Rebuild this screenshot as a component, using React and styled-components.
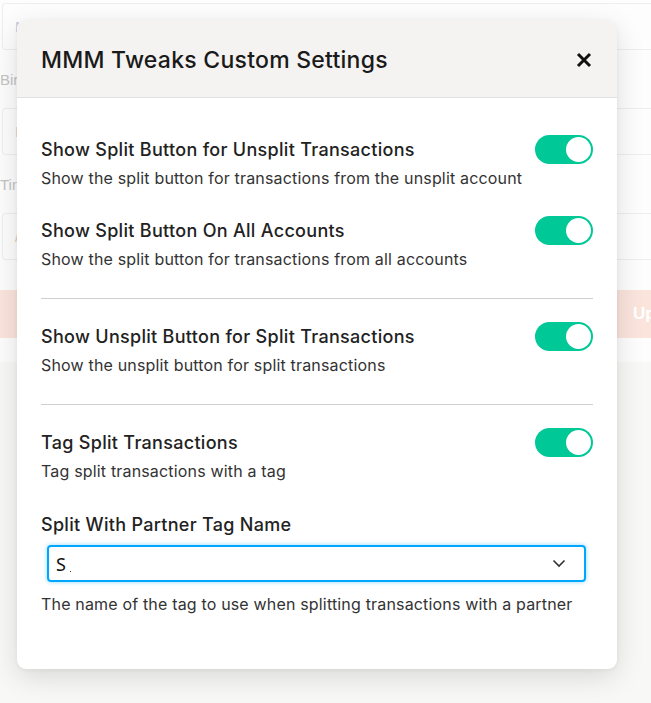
import React from "react";
import styled, { createGlobalStyle } from "styled-components";

const Global = createGlobalStyle`
  html, body { margin: 0; padding: 0; }
  body {
    width: 651px; height: 703px; overflow: hidden;
    background: #f8f8f6;
    font-family: Inter, "Noto Sans", sans-serif;
    color: #222;
  }
`;

const Stage = styled.div`
  position: relative;
  width: 651px;
  height: 703px;
  overflow: hidden;
  background: #f8f8f6;
`;

const BgForm = styled.div`
  display: flex;
  flex-direction: column;
  background: #fdfdfd;
  padding: 3px 0 0 2px;
  height: 362px;
  box-sizing: border-box;
  width: 700px;
`;

const BgInput = styled.div`
  height: 47px;
  box-sizing: border-box;
  border: 1px solid #eeeeee;
  border-right: none;
  border-radius: 4px 0 0 4px;
  display: flex;
  align-items: center;
  padding-left: 12px;
  font-family: "Liberation Sans", Arial, sans-serif;
  font-size: 15px;
  color: ${(p) => p.$color || "#c9ccd8"};
`;

const BgLabel = styled.div`
  height: ${(p) => p.$h || 58}px;
  display: flex;
  align-items: center;
  margin-left: -2px;
  font-family: "Liberation Sans", Arial, sans-serif;
  font-size: 15px;
  color: #c4c4c4;
`;

const BgButton = styled.div`
  height: 48px;
  margin-left: -2px;
  background: #fbe4dc;
  display: flex;
  align-items: center;
  padding-left: 633px;
  font-family: "Liberation Sans", Arial, sans-serif;
  font-weight: 700;
  font-size: 17px;
  color: #ffffff;
`;

const Modal = styled.div`
  position: absolute;
  top: 20px;
  left: 17px;
  width: 600px;
  height: 649px;
  background: #ffffff;
  border-radius: 9px;
  box-shadow: 0 8px 28px rgba(0, 0, 0, 0.13), 0 1px 4px rgba(0, 0, 0, 0.05);
  overflow: hidden;
  display: flex;
  flex-direction: column;
`;

const Header = styled.div`
  height: 78px;
  box-sizing: border-box;
  background: #f4f3f1;
  border-bottom: 1px solid #e2e1df;
  display: flex;
  align-items: center;
  justify-content: space-between;
  padding: 2px 24px 0 24px;
`;

const Title = styled.h2`
  margin: 0;
  font-size: 23px;
  font-weight: 500;
  letter-spacing: 0.25px;
  color: #1a1a1a;
`;

const Close = styled.button`
  border: none;
  background: none;
  padding: 0;
  width: 20px;
  height: 20px;
  display: flex;
  align-items: center;
  justify-content: center;
  cursor: pointer;
  margin-right: -1px;
`;

const Body = styled.div`
  padding: 37px 24px 0 24px;
  display: flex;
  flex-direction: column;
`;

const Setting = styled.div`
  display: flex;
  flex-direction: column;
  margin-bottom: ${(p) => p.$mb || 0}px;
`;

const SettingHead = styled.div`
  display: flex;
  align-items: center;
  justify-content: space-between;
  height: 29px;
`;

const SettingTitle = styled.div`
  font-size: 18px;
  font-weight: 500;
  letter-spacing: 0.3px;
  color: #222;
`;

const Desc = styled.div`
  font-size: 16px;
  line-height: 20px;
  letter-spacing: 0.17px;
  color: #333;
  margin-top: 4px;
`;

const Divider = styled.hr`
  border: none;
  border-top: 1px solid #cfcfcf;
  margin: ${(p) => p.$m};
  height: 0;
`;

const Track = styled.div`
  width: 58px;
  height: 29px;
  border-radius: 15px;
  background: ${(p) => (p.$on ? "#00c896" : "#ccc")};
  position: relative;
  flex-shrink: 0;
`;

const Knob = styled.div`
  position: absolute;
  top: 2px;
  right: 2px;
  width: 25px;
  height: 25px;
  border-radius: 50%;
  background: #fff;
`;

const FieldLabel = styled.div`
  font-size: 18px;
  font-weight: 500;
  letter-spacing: 0.3px;
  color: #222;
  margin-top: 33px;
`;

const SelectBox = styled.div`
  margin: 10px 7px 0 6px;
  height: 37px;
  box-sizing: border-box;
  border: 2px solid #00a7ff;
  border-radius: 4px;
  box-shadow: 0 0 4px rgba(0, 167, 255, 0.45);
  display: flex;
  align-items: center;
  justify-content: space-between;
  padding: 0 18px 0 7px;
`;

const SelectValue = styled.span`
  font-family: "Noto Sans", Inter, sans-serif;
  font-size: 18px;
  color: #111;
  position: relative;
  &::after {
    content: "";
    position: absolute;
    right: -5px;
    bottom: 4px;
    width: 1px;
    height: 1px;
    background: #333;
  }
`;

const Help = styled.div`
  font-size: 16px;
  line-height: 20px;
  letter-spacing: 0.17px;
  color: #333;
  margin-top: 12px;
`;

function Toggle({ on }) {
  return (
    <Track $on={on}>
      <Knob />
    </Track>
  );
}

function SettingRow({ title, desc, mb }) {
  return (
    <Setting $mb={mb}>
      <SettingHead>
        <SettingTitle>{title}</SettingTitle>
        <Toggle on />
      </SettingHead>
      <Desc>{desc}</Desc>
    </Setting>
  );
}

export default function App() {
  return (
    <>
      <Global />
      <Stage>
        <BgForm>
          <BgInput $color="#c8cbe0">N</BgInput>
          <BgLabel>Bir</BgLabel>
          <BgInput $color="#d0d0d0">I</BgInput>
          <BgLabel>Tin</BgLabel>
          <BgInput $color="#e8c9b8">/</BgInput>
          <BgLabel $h={30} />
          <BgButton>Up</BgButton>
        </BgForm>
        <Modal>
          <Header>
            <Title>MMM Tweaks Custom Settings</Title>
            <Close aria-label="Close">
              <svg width="16" height="16" viewBox="0 0 16 16">
                <path d="M2 2 L14 14 M14 2 L2 14" stroke="#111" strokeWidth="3" strokeLinecap="butt" />
              </svg>
            </Close>
          </Header>
          <Body>
            <SettingRow
              title="Show Split Button for Unsplit Transactions"
              desc="Show the split button for transactions from the unsplit account"
              mb={28}
            />
            <SettingRow
              title="Show Split Button On All Accounts"
              desc="Show the split button for transactions from all accounts"
            />
            <Divider $m="29px 0 23px 0" />
            <SettingRow
              title="Show Unsplit Button for Split Transactions"
              desc="Show the unsplit button for split transactions"
            />
            <Divider $m="29px 0 23px 0" />
            <SettingRow
              title="Tag Split Transactions"
              desc="Tag split transactions with a tag"
            />
            <FieldLabel>Split With Partner Tag Name</FieldLabel>
            <SelectBox>
              <SelectValue>S</SelectValue>
              <svg width="14" height="9" viewBox="0 0 14 9">
                <path d="M1.5 1.5 L7 7 L12.5 1.5" fill="none" stroke="#333" strokeWidth="1.6" />
              </svg>
            </SelectBox>
            <Help>The name of the tag to use when splitting transactions with a partner</Help>
          </Body>
        </Modal>
      </Stage>
    </>
  );
}
